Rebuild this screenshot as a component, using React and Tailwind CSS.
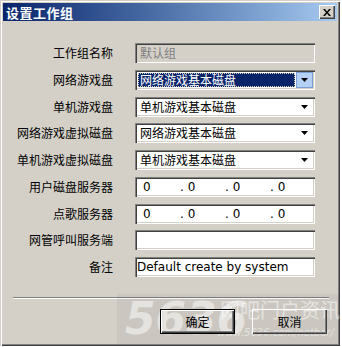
import React from "react";

const FONT = { fontFamily: '"Noto Sans CJK SC", "Noto Sans", sans-serif' };
const LATIN = { fontFamily: 'Tahoma, "DejaVu Sans", "Noto Sans CJK SC", sans-serif' };

const sunken =
  "shadow-[inset_1px_1px_0_#808080,inset_2px_2px_0_#404040,inset_-1px_-1px_0_#ffffff,inset_-2px_-2px_0_#d4d0c8]";

function Arrow() {
  return (
    <svg width="7" height="4" viewBox="0 0 7 4">
      <path d="M0 0H7L3.5 4Z" fill="#000" />
    </svg>
  );
}

function Combo({ value, selected }) {
  return (
    <div className={`h-[20px] w-[180px] bg-white ${sunken} flex items-stretch p-[2px]`}>
      {selected ? (
        <div className="flex-1 flex items-stretch p-[1px]">
          <div className="flex-1 bg-[#0a246a] text-white outline outline-1 outline-dotted outline-[#d4d0c8] -outline-offset-1 flex items-center pl-[2px] text-[12px] leading-none">
            {value}
          </div>
        </div>
      ) : (
        <div className="flex-1 flex items-center pl-[3px] text-[12px] leading-none text-black">{value}</div>
      )}
      <div
        className={`w-[17px] flex items-center justify-center ${
          selected ? "bg-[#b4d0f4] border border-[#7b9ed3]" : ""
        }`}
      >
        <Arrow />
      </div>
    </div>
  );
}

function Field({ children, disabled }) {
  return (
    <div
      className={`h-[20px] w-[180px] ${disabled ? "bg-[#d4d0c8] text-[#808080]" : "bg-white text-black"} ${sunken} flex items-center pl-[5px] text-[12px] leading-none`}
    >
      {children}
    </div>
  );
}

function IP() {
  return (
    <div className={`h-[20px] w-[180px] bg-white ${sunken} flex items-center pl-[8px] text-[12px] leading-none`} style={LATIN}>
      <span className="w-[37px]">0</span>
      <span className="w-[45px]">.&nbsp;0</span>
      <span className="w-[45px]">.&nbsp;0</span>
      <span className="w-[45px]">.&nbsp;0</span>
    </div>
  );
}

function Row({ label, children }) {
  return (
    <div className="flex items-center h-[20px]">
      <div className="w-[113px] text-right text-[12px] leading-none text-black">{label}</div>
      <div className="ml-[22px]">{children}</div>
    </div>
  );
}

function Button({ children, def }) {
  return (
    <div
      className={`relative z-10 w-[75px] h-[25px] flex items-center justify-center text-[12px] text-black ${
        def
          ? "border border-black shadow-[inset_1px_1px_0_#ffffff,inset_-1px_-1px_0_#404040,inset_-2px_-2px_0_#808080]"
          : "shadow-[inset_1px_1px_0_#ffffff,inset_-1px_-1px_0_#404040,inset_-2px_-2px_0_#808080]"
      }`}
    >
      {children}
    </div>
  );
}

export default function App() {
  return (
    <div className="w-[342px] h-[347px] bg-white" style={FONT}>
      <div className="relative w-[340px] h-[346px] bg-[#d4d0c8] p-[3px] shadow-[inset_1px_1px_0_#d4d0c8,inset_2px_2px_0_#ffffff,inset_-1px_-1px_0_#404040,inset_-2px_-2px_0_#808080] flex flex-col overflow-hidden">
        <div className="h-[18px] bg-gradient-to-r from-[#0a246a] to-[#a6caf0] flex items-center justify-between pl-[3px] pr-[2px]">
          <span className="text-white font-bold text-[13px] leading-none tracking-[0.5px]">设置工作组</span>
          <div className="w-[16px] h-[14px] bg-[#d4d0c8] shadow-[inset_1px_1px_0_#ffffff,inset_-1px_-1px_0_#404040,inset_-2px_-2px_0_#808080] flex items-center justify-center">
            <svg width="8" height="7" viewBox="0 0 8 7">
              <path d="M0 0h2l2 2.5L6 0h2L5 3.5 8 7H6L4 4.5 2 7H0l3-3.5z" fill="#000" />
            </svg>
          </div>
        </div>

        <div className="flex flex-col gap-[6.75px] pt-[22px] -ml-[3px]">
          <Row label="工作组名称">
            <Field disabled>默认组</Field>
          </Row>
          <Row label="网络游戏盘">
            <Combo value="网络游戏基本磁盘" selected />
          </Row>
          <Row label="单机游戏盘">
            <Combo value="单机游戏基本磁盘" />
          </Row>
          <Row label="网络游戏虚拟磁盘">
            <Combo value="网络游戏基本磁盘" />
          </Row>
          <Row label="单机游戏虚拟磁盘">
            <Combo value="单机游戏基本磁盘" />
          </Row>
          <Row label="用户磁盘服务器">
            <IP />
          </Row>
          <Row label="点歌服务器">
            <IP />
          </Row>
          <Row label="网管呼叫服务端">
            <Field />
          </Row>
          <Row label="备注">
            <Field>
              <span style={LATIN} className="-ml-[3px]">Default create by system</span>
            </Field>
          </Row>
        </div>

        <div className="mt-[20px] ml-[10px] mr-[8px] border-t border-t-[#808080] border-b border-b-white" />

        <div className="absolute left-[117px] top-[294px] w-[225px] h-[50px] bg-black/[0.04] pointer-events-none">
          <span className="absolute left-[8px] top-[3px] text-[44px] font-black italic leading-none text-white/50" style={LATIN}>
            5636
          </span>
          <span className="absolute left-[103px] top-[6px] text-[20px] leading-none text-white/50">网吧门户资讯</span>
          <span className="absolute left-[100px] top-[34px] text-[10px] italic leading-none text-white/50" style={LATIN}>
            www.5636.com/netbar/
          </span>
        </div>

        <div className="flex justify-end gap-[17px] mt-[10px] pr-[10px]">
          <Button def>确定</Button>
          <Button>取消</Button>
        </div>
      </div>
    </div>
  );
}
